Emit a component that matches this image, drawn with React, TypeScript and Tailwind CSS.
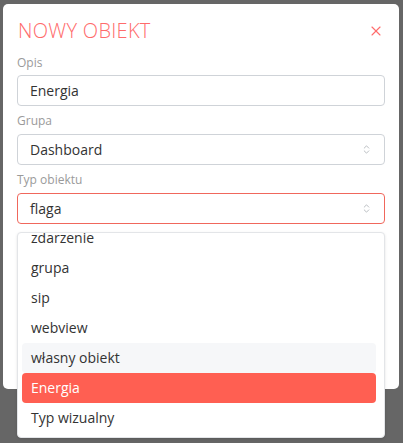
import { ChevronsUpDown, X } from 'lucide-react';

const options = ['zdarzenie', 'grupa', 'sip', 'webview', 'własny obiekt', 'Energia', 'Typ wizualny'];

function SelectBox({ value, active }: { value: string; active?: boolean }) {
    return (
        <div
            className={`flex h-[31px] items-center justify-between rounded-[4px] border bg-white pl-3 pr-[12px] text-[14px] text-[#333] ${
                active ? 'border-[#f0675c]' : 'border-[#cfd3d8]'
            }`}
        >
            <span>{value}</span>
            <ChevronsUpDown className="h-[11px] w-[11px] text-[#9aa0a6]" strokeWidth={1.5} />
        </div>
    );
}

export default function App() {
    return (
        <div
            className="relative h-[443px] w-[403px] overflow-hidden bg-[#666666] pt-[4px] pl-[3px]"
            style={{ fontFamily: '"Open Sans", "Liberation Sans", sans-serif' }}
        >
            {/* modal */}
            <div className="h-[385px] w-[396px] rounded-[5px] bg-white px-[14px]">
                <div className="flex h-[52px] items-center justify-between pl-[1px] pt-[2px]">
                    <h2 className="text-[20px] font-light tracking-[0.3px] text-[#ff6b6b]">NOWY OBIEKT</h2>
                    <X className="mr-[1px] h-[16px] w-[16px] text-[#ff6b6b]" strokeWidth={1.6} />
                </div>

                <label className="mb-[5px] block text-[12px] leading-[14px] text-[#9a9a9a]">Opis</label>
                <div className="flex h-[31px] items-center rounded-[4px] border border-[#cfd3d8] pl-3 text-[14px] text-[#333]">
                    Energia
                </div>

                <label className="mt-[8px] mb-[6px] block text-[12px] leading-[14px] text-[#9a9a9a]">Grupa</label>
                <SelectBox value="Dashboard" />

                <label className="mt-[8px] mb-[6px] block text-[12px] leading-[14px] text-[#9a9a9a]">Typ obiektu</label>
                <SelectBox value="flaga" active />
            </div>

            {/* dropdown list */}
            <div className="absolute top-[232px] left-[17px] h-[206px] w-[368px] overflow-hidden rounded-[4px] border border-[#e3e5e8] bg-white shadow-sm">
                <ul className="mt-[-10px] pl-[4px] pr-[8px] text-[14px] text-[#333]">
                    {options.map((opt) => (
                        <li
                            key={opt}
                            className={`flex h-[30px] items-center rounded-[4px] pl-[9px] pb-[1px] ${
                                opt === 'Energia'
                                    ? 'bg-[#ff5f52] text-white'
                                    : opt === 'własny obiekt'
                                      ? 'bg-[#f6f7f9]'
                                      : ''
                            }`}
                        >
                            {opt}
                        </li>
                    ))}
                </ul>
            </div>
        </div>
    );
}
